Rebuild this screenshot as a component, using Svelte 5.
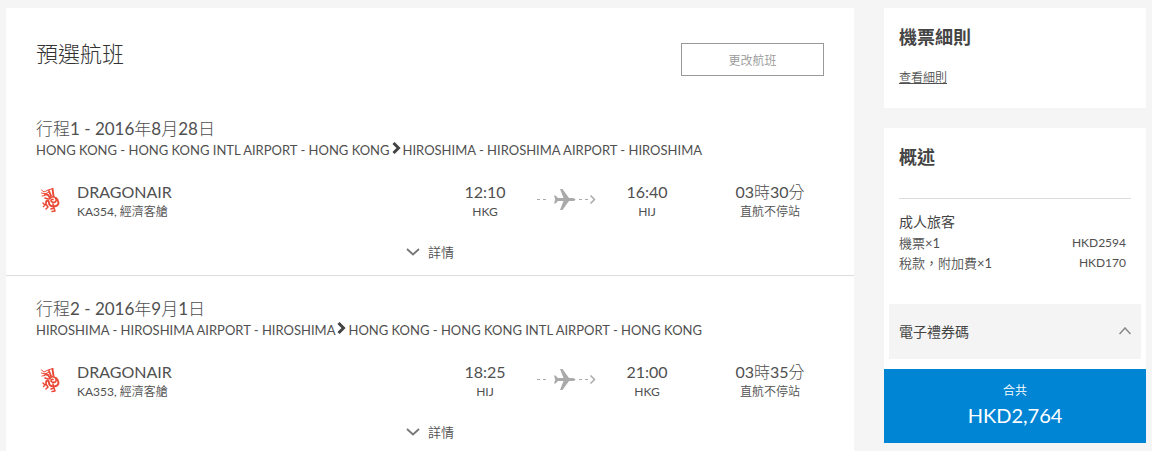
<script>
  const legs = [
    {
      title: '行程1 - 2016年8月28日',
      origin: 'HONG KONG - HONG KONG INTL AIRPORT - HONG KONG',
      destination: 'HIROSHIMA - HIROSHIMA AIRPORT - HIROSHIMA',
      airline: 'DRAGONAIR',
      flight: 'KA354, 經濟客艙',
      departs: '12:10',
      from: 'HKG',
      arrives: '16:40',
      to: 'HIJ',
      duration: '03時30分',
      stops: '直航不停站'
    },
    {
      title: '行程2 - 2016年9月1日',
      origin: 'HIROSHIMA - HIROSHIMA AIRPORT - HIROSHIMA',
      destination: 'HONG KONG - HONG KONG INTL AIRPORT - HONG KONG',
      airline: 'DRAGONAIR',
      flight: 'KA353, 經濟客艙',
      departs: '18:25',
      from: 'HIJ',
      arrives: '21:00',
      to: 'HKG',
      duration: '03時35分',
      stops: '直航不停站'
    }
  ];

  const fares = [
    { label: '機票×1', amount: 'HKD2594' },
    { label: '稅款，附加費×1', amount: 'HKD170' }
  ];
</script>

<div class="page">
  <main class="card">
    <header>
      <h1>預選航班</h1>
      <button class="change" type="button">更改航班</button>
    </header>

    {#each legs as leg}
      <section class="leg">
        <h2>{leg.title}</h2>
        <p class="route">
          <span>{leg.origin}</span>
          <svg width="9" height="12" viewBox="0 0 9 12" aria-hidden="true">
            <path d="M1.5 1 L6.5 6 L1.5 11" fill="none" stroke="#444" stroke-width="3" />
          </svg>
          <span>{leg.destination}</span>
        </p>

        <div class="flight">
          <div class="logo">
            <svg width="20" height="26" viewBox="0 0 20 26" fill="none" stroke="#ea4a35" stroke-linecap="round" stroke-linejoin="round" aria-hidden="true">
              <path d="M0.500 3 L3 5 L7 3 L12 1.500 M0.500 6 L4 7 L8 5 M1 9 L4 8.500" stroke-width="1" />
              <path d="M4 7 L7 8 L9 11 M8 4 L10 9 M11.500 2 L12.500 9" stroke-width="1.900" />
              <path d="M4 11 L7 12 M8 12 C10 9 14 9 15 12 C16 15 13 16 11 15 C9 14 10 12 12 12.500" stroke-width="1.600" />
              <path d="M15 11 C18 13 18.500 18 15 19 C12 20 8 19 8 16 C8 13 5 13 5 16" stroke-width="1.900" />
              <path d="M2 16 L4 18 L2.500 19.500 M5 17 L7 20 L5 22 M12 17 L13 21 L10 22 M13 21 L14 24 L11 24.500" stroke-width="1.500" />
            </svg>
          </div>
          <div class="airline">
            <div class="big">{leg.airline}</div>
            <div class="small">{leg.flight}</div>
          </div>
          <div class="point">
            <div class="big">{leg.departs}</div>
            <div class="small">{leg.from}</div>
          </div>
          <svg class="plane" width="60" height="24" viewBox="0 0 60 24" aria-hidden="true">
            <path d="M1 12.500 H4 M7 12.500 H10 M43 12.500 H46 M49 12.500 H52" stroke="#aaa" stroke-width="1" />
            <path d="M54.500 8.500 L58.500 12.500 L54.500 16.500" fill="none" stroke="#aaa" stroke-width="1.500" />
            <path d="M18 8.500 H19.500 L22 11 H27.500 L24 2 H26.500 L33 11 H37 Q39.500 11.500 39.500 12.500 Q39.500 13.500 37 14 H33 L26.500 23 H24 L27.500 14 H22 L19.500 16.500 H18 L19.200 12.500 Z" fill="#aaa" />
          </svg>
          <div class="point">
            <div class="big">{leg.arrives}</div>
            <div class="small">{leg.to}</div>
          </div>
          <div class="duration">
            <div class="big">{leg.duration}</div>
            <div class="small">{leg.stops}</div>
          </div>
        </div>

        <button class="details" type="button">
          <svg width="14" height="8" viewBox="0 0 14 8" aria-hidden="true">
            <path d="M1 1 L7 6.500 L13 1" fill="none" stroke="#777" stroke-width="1.800" />
          </svg>
          詳情
        </button>
      </section>
    {/each}
  </main>

  <aside>
    <section class="card rules">
      <h3>機票細則</h3>
      <a href="#rules">查看細則</a>
    </section>

    <section class="card summary">
      <h3>概述</h3>
      <div class="fares">
        <h4>成人旅客</h4>
        <dl>
          {#each fares as fare}
            <div class="fare">
              <dt>{fare.label}</dt>
              <dd>{fare.amount}</dd>
            </div>
          {/each}
        </dl>
      </div>
      <button class="voucher" type="button" aria-expanded="true">
        電子禮券碼
        <svg width="12" height="8" viewBox="0 0 12 8" aria-hidden="true">
          <path d="M0.500 7 L6 1 L11.500 7" fill="none" stroke="#888" stroke-width="1.500" />
        </svg>
      </button>
      <div class="total">
        <div class="total-label">合共</div>
        <div class="total-amount">HKD2,764</div>
      </div>
    </section>
  </aside>
</div>

<style>
  :global(body) {
    background: #f5f5f5;
  }

  .page {
    display: grid;
    grid-template-columns: minmax(0, 1fr) 262px;
    gap: 30px;
    padding: 8px 6px 0;
    color: #505050;
    font-family: Lato, "Noto Sans CJK TC DemiLight", "Noto Sans CJK TC", sans-serif;
    font-size: 12px;
    line-height: 20px;
  }

  h1, h2, h3, h4, p, dl, dd {
    margin: 0;
  }

  button {
    font-family: inherit;
    color: inherit;
    cursor: pointer;
  }

  .card {
    background: #fff;
  }

  header {
    display: flex;
    align-items: flex-start;
    justify-content: space-between;
    padding: 35px 30px 20px;
  }

  h1, h2, .big {
    font-family: Lato, "Noto Sans CJK TC Light", "Noto Sans CJK TC", sans-serif;
  }

  h1 {
    font-size: 22px;
    font-weight: 300;
    line-height: 22px;
    color: #333;
  }

  .change {
    width: 143px;
    height: 33px;
    padding: 0;
    border: 1px solid #999;
    background: #fff;
    color: #999;
    font-size: 12px;
  }

  .leg {
    padding: 21px 30px 13px;
    border-bottom: 1px solid #ddd;
  }

  .leg:last-child {
    padding-bottom: 9px;
    border-bottom: 0;
  }

  h2 {
    font-size: 17px;
    font-weight: 400;
    line-height: 23px;
  }

  .route {
    display: flex;
    gap: 2px;
    font-size: 13px;
  }

  .route svg {
    margin-top: 2px;
  }

  .flight {
    display: flex;
    margin-top: 21px;
  }

  .logo {
    width: 41px;
    padding: 6px 0 0 5px;
    box-sizing: border-box;
    line-height: 0;
  }

  .airline {
    flex: 1;
  }

  .big {
    font-size: 16px;
    line-height: 22px;
  }

  .small {
    font-size: 12px;
    line-height: 17px;
  }

  .point {
    width: 102px;
    text-align: center;
  }

  .plane {
    margin-top: 6px;
  }

  .duration {
    width: 108px;
    margin-left: 18px;
    text-align: center;
  }

  .details {
    display: flex;
    align-items: center;
    gap: 8px;
    margin: 22px auto 0;
    padding: 0;
    border: 0;
    background: none;
    font-size: 13px;
    line-height: 20px;
  }

  .rules {
    height: 100px;
    margin-bottom: 20px;
  }

  .rules, .summary {
    padding-top: 16px;
    box-sizing: border-box;
  }

  h3 {
    padding: 0 15px;
    font-family: Lato, "Noto Sans CJK TC", sans-serif;
    font-size: 18px;
    font-weight: 700;
    line-height: 26px;
    color: #444;
  }

  a {
    display: inline-block;
    margin: 18px 15px 0;
    color: inherit;
  }

  .fares {
    margin: 28px 15px 0;
    padding-top: 11px;
    border-top: 1px solid #ddd;
  }

  h4, .voucher {
    font-family: Lato, "Noto Sans CJK TC", sans-serif;
    font-size: 14px;
    font-weight: 400;
    color: #444;
  }

  h4 {
    line-height: 23px;
  }

  .fare {
    display: flex;
    justify-content: space-between;
    padding-right: 5px;
  }

  dt {
    font-size: 13px;
  }

  .voucher {
    display: flex;
    align-items: center;
    justify-content: space-between;
    width: calc(100% - 10px);
    height: 55px;
    margin: 31px 5px 10px;
    padding: 0 10px 2px;
    border: 0;
    background: #f4f4f4;
  }

  .total {
    padding: 11px 0 14px;
    background: #0085d5;
    color: #fff;
    text-align: center;
  }

  .total-label {
    font-size: 12px;
    line-height: 21px;
  }

  .total-amount {
    font-size: 20px;
    line-height: 28px;
  }
</style>
